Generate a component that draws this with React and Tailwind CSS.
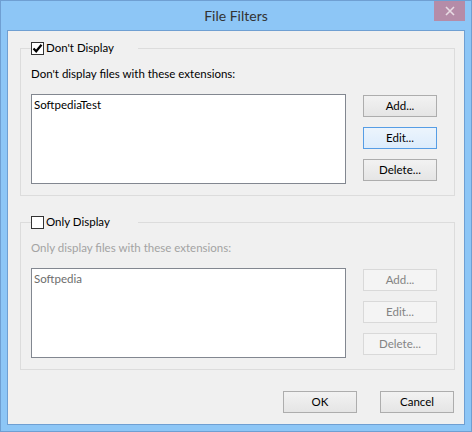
function Box({ checked }) {
  return (
    <span className="w-[13px] h-[13px] border border-[#333] bg-white flex items-center justify-center shrink-0">
      {checked && (
        <svg width="11" height="11" viewBox="0 0 11 11">
          <path d="M1.5 5.5 L4.2 8.3 L9.5 1.8" fill="none" stroke="#000" strokeWidth="2.2" />
        </svg>
      )}
    </span>
  )
}

function Btn({ children, disabled, focused }) {
  let cls = 'border-[#adadad] bg-gradient-to-b from-[#f2f2f2] to-[#e5e5e5] text-black'
  if (focused) cls = 'bg-gradient-to-b from-[#ecf4fc] to-[#dcecfc] text-black border-[#569de5]'
  if (disabled) cls = 'border-[#d9d9d9] bg-[#f4f4f4] text-[#838383]'
  return (
    <div className={`w-[74px] h-[22px] border flex items-center justify-center ${cls}`}>
      {children}
    </div>
  )
}

function Group({ label, checked, desc, item, disabled }) {
  return (
    <fieldset className="border border-[#dcdcdc] h-[155px] px-[10px]">
      <legend className="w-[107px] h-[14px] flex items-center gap-[2px] text-black">
        <Box checked={checked} />
        <span>{label}</span>
      </legend>
      <div className={`mt-[11px] leading-4 ${disabled ? 'text-[#a3a3a3]' : 'text-black'}`}>{desc}</div>
      <div className="flex mt-[12px]">
        <div className="w-[315px] h-[90px] border border-[#828790] bg-white px-[2px] pt-[1px]">
          <span className={disabled ? 'text-[#6d6d6d]' : 'text-black'}>{item}</span>
        </div>
        <div className="ml-[17px] flex flex-col gap-[10px] mt-[1px]">
          <Btn disabled={disabled}>Add...</Btn>
          <Btn disabled={disabled} focused={!disabled}>Edit...</Btn>
          <Btn disabled={disabled}>Delete...</Btn>
        </div>
      </div>
    </fieldset>
  )
}

export default function App() {
  return (
    <div
      className="w-[472px] h-[432px] bg-[#8dc6f6] border border-[#6f9fd2] flex flex-col px-[6px] pb-[6px] text-[11.5px]"
      style={{ fontFamily: 'Lato, "Noto Sans", sans-serif' }}
    >
      <div className="h-[29px] flex items-center justify-center relative">
        <span className="text-[14px] text-[#333] -mt-[1px]">File Filters</span>
        <div className="absolute right-0 top-0 w-[31px] h-[20px] bg-[#b58ca8] flex items-center justify-center">
          <svg width="10" height="10" viewBox="0 0 10 10">
            <path d="M1 1 L9 9 M9 1 L1 9" stroke="#e8dce4" strokeWidth="1.6" />
          </svg>
        </div>
      </div>
      <div className="flex-1 border border-[#6f9fd2] bg-[#f0f0f0] pl-[12px] pr-[9px] pt-[10px]">
        <div className="flex flex-col gap-[19px]">
          <Group
            label="Don't Display"
            checked
            desc="Don't display files with these extensions:"
            item="SoftpediaTest"
          />
          <Group
            label="Only Display"
            desc="Only display files with these extensions:"
            item="Softpedia"
            disabled
          />
        </div>
        <div className="flex justify-end gap-[23px] mt-[21px] pr-[1px]">
          <Btn>OK</Btn>
          <Btn>Cancel</Btn>
        </div>
      </div>
    </div>
  )
}
